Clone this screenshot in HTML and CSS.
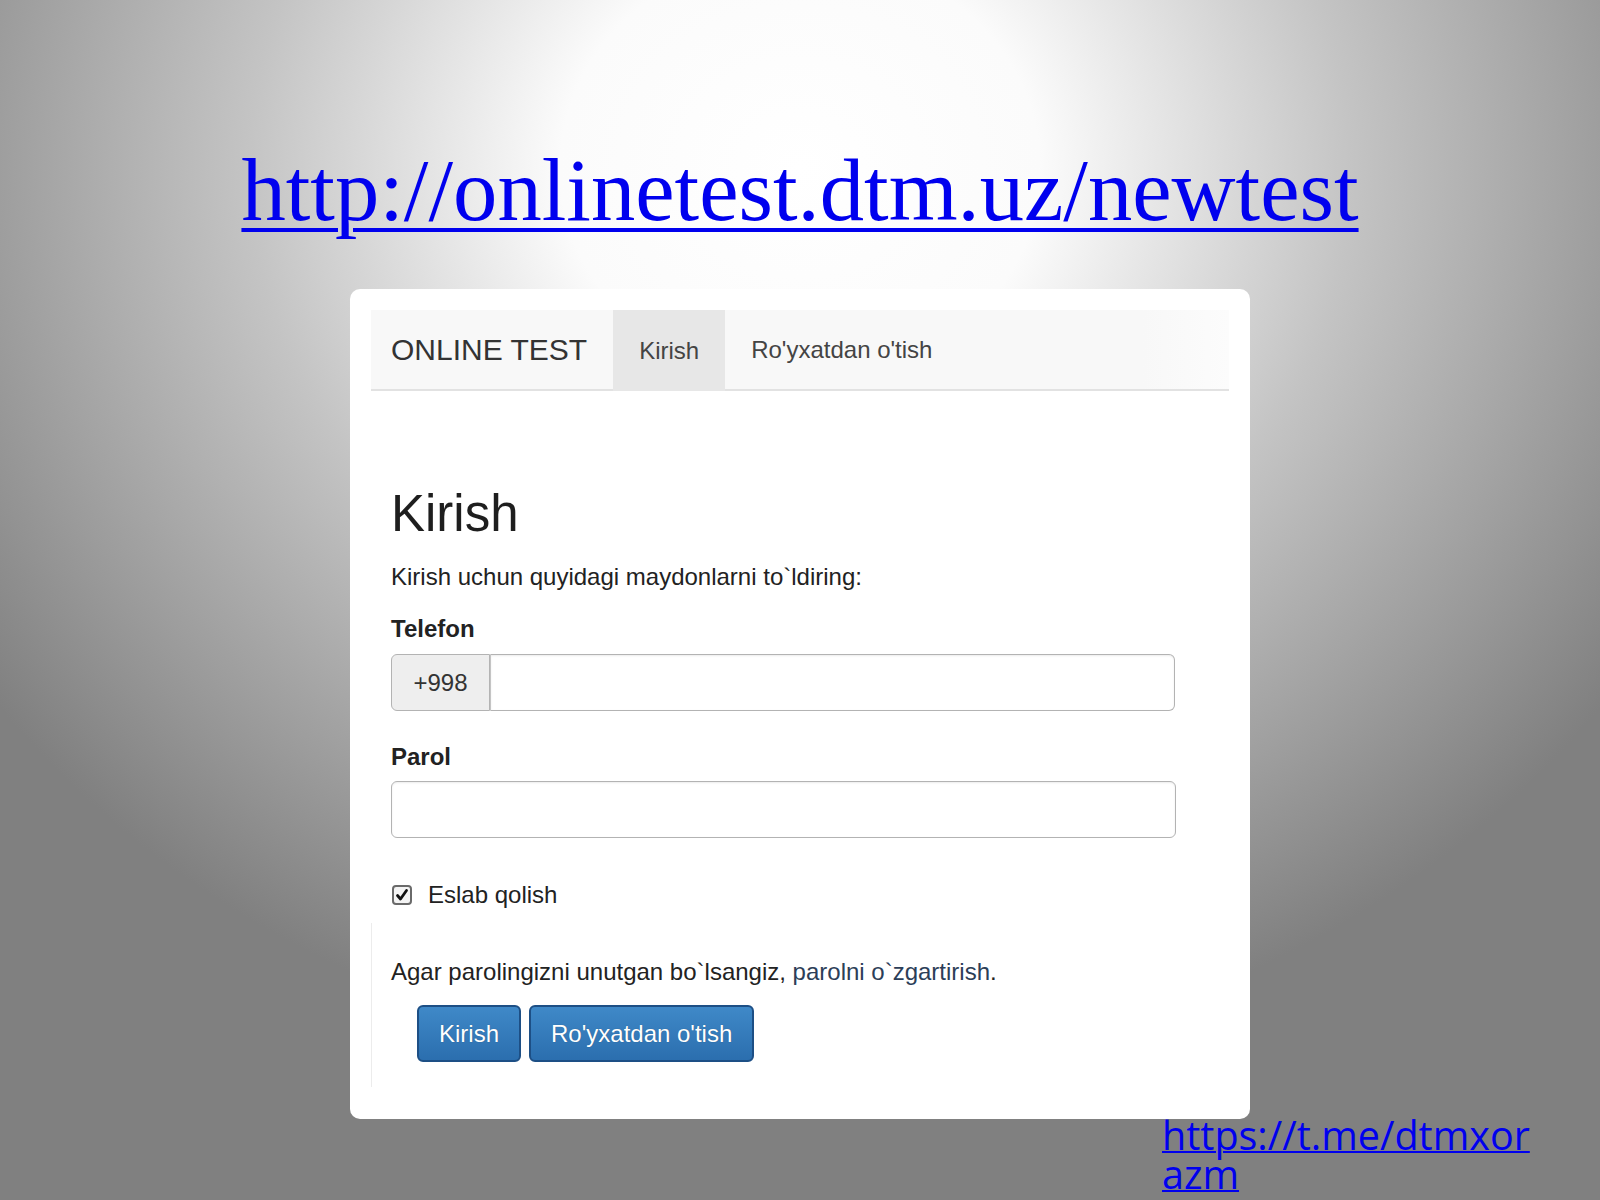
FILE: index.html
```html
<!DOCTYPE html>
<html lang="uz">
<head>
    <meta charset="UTF-8">
    <meta name="viewport" content="width=device-width, initial-scale=1.0">
    <title>Online test</title>
    <link rel="stylesheet" href="styles.css">
</head>
<body>

<div class="slide">
    <div class="title">
        <a href="#" class="big-link">http://onlinetest.dtm.uz/newtest</a>
    </div>

    <div class="card">
        <div class="navbar">
            <span class="brand">ONLINE TEST</span>
            <span class="tab active">Kirish</span>
            <span class="tab">Ro'yxatdan o'tish</span>
        </div>

        <div class="content">
            <h2 class="heading">Kirish</h2>
            <p class="intro">Kirish uchun quyidagi maydonlarni to`ldiring:</p>

            <label class="label">Telefon</label>
            <div class="input-group">
                <span class="addon">+998</span>
                <span class="field"></span>
            </div>

            <label class="label label-gap">Parol</label>
            <div class="input"></div>

            <div class="remember">
                <span class="checkbox">
                    <svg width="14" height="14" viewBox="0 0 14 14"><path d="M2.5 7.5 L5.5 11 L11.5 2.5" fill="none" stroke="#111" stroke-width="2.8" stroke-linecap="round" stroke-linejoin="round"/></svg>
                </span>
                <span>Eslab qolish</span>
            </div>
        </div>

        <div class="actions">
            <p class="forgot">Agar parolingizni unutgan bo`lsangiz, <a href="#">parolni o`zgartirish</a>.</p>
            <div class="buttons">
                <span class="btn">Kirish</span>
                <span class="btn">Ro'yxatdan o'tish</span>
            </div>
        </div>
    </div>

    <div class="footer">
        <a href="#" class="tg-link">https://t.me/dtmxorazm</a>
    </div>
</div>

</body>
</html>
```

FILE: styles.css
```css
body {
    margin: 0;
    width: 1600px;
    height: 1200px;
    overflow: hidden;
    font-family: "Liberation Sans", Arial, sans-serif;
    background: radial-gradient(ellipse 1000px 900px at 50% 14%, #ffffff 0%, #fbfbfb 24%, #c4c4c4 55%, #808080 100%);
}

.slide {
    display: flex;
    flex-direction: column;
    align-items: center;
}

.title {
    margin-top: 140px;
    line-height: 100px;
}

.big-link {
    font-family: "Liberation Serif", "Times New Roman", serif;
    font-size: 88.6px;
    color: #0000ee;
    text-decoration-thickness: 4px;
    text-underline-offset: 8px;
}

.card {
    margin-top: 24px;
    width: 858px;
    height: 788px;
    padding: 21px 21px;
    background: #fff;
    border-radius: 10px;
}

.navbar {
    display: flex;
    align-items: stretch;
    height: 79px;
    background: linear-gradient(to right, #f8f8f8 90%, #fcfcfc);
    border-bottom: 2px solid #e2e2e2;
    padding-left: 20px;
}

.brand {
    display: flex;
    align-items: center;
    padding-right: 26px;
    font-size: 30px;
    color: #333;
}

.tab {
    display: flex;
    align-items: center;
    padding: 0 26px;
    font-size: 24px;
    color: #444;
}

.tab.active {
    background: #e7e7e7;
    margin-bottom: -2px;
}

.content {
    padding-left: 20px;
    color: #222;
    font-size: 24px;
}

.heading {
    margin: 95px 0 0;
    font-size: 51px;
    line-height: 56px;
    font-weight: normal;
    color: #1e1e1e;
}

.intro {
    margin: 18px 0 0;
    line-height: 34px;
}

.label {
    display: block;
    margin-top: 18px;
    line-height: 34px;
    font-weight: bold;
}

.label-gap {
    margin-top: 29px;
}

.input-group {
    display: flex;
    margin-top: 8px;
    width: 784px;
    height: 57px;
}

.addon {
    display: flex;
    align-items: center;
    justify-content: center;
    width: 97px;
    background: #eee;
    border: 1px solid #b3b3b3;
    border-radius: 6px 0 0 6px;
    font-size: 24px;
    color: #333;
}

.field {
    flex: 1;
    border: 1px solid #b3b3b3;
    border-left: 1px solid #c4c4c4;
    border-radius: 0 6px 6px 0;
    box-shadow: inset 0 1px 2px rgba(0, 0, 0, 0.08);
}

.input {
    margin-top: 7px;
    width: 783px;
    height: 55px;
    border: 1px solid #b3b3b3;
    border-radius: 6px;
    box-shadow: inset 0 1px 2px rgba(0, 0, 0, 0.08);
}

.remember {
    display: flex;
    align-items: center;
    gap: 16px;
    margin-top: 40px;
    line-height: 34px;
}

.checkbox {
    display: flex;
    align-items: center;
    justify-content: center;
    width: 16px;
    height: 16px;
    margin-left: 1px;
    border: 2px solid #6a6a6a;
    border-radius: 4px;
    background: #f4f4f4;
}

.actions {
    margin-top: 11px;
    padding: 32px 0 25px 19px;
    border-left: 1px solid #ececec;
    font-size: 24px;
    color: #222;
}

.forgot {
    margin: 0;
    line-height: 34px;
}

.forgot a {
    color: #2c3e58;
    text-decoration: none;
}

.buttons {
    display: flex;
    gap: 8px;
    margin: 16px 0 0 26px;
}

.btn {
    display: flex;
    align-items: center;
    height: 53px;
    padding: 0 20px;
    background: linear-gradient(#3f89c8, #2b6eae);
    border: 2px solid #1d4f85;
    border-radius: 6px;
    color: #fff;
    font-size: 24px;
    text-shadow: 0 0 1px rgba(0, 0, 0, 0.3);
}

.footer {
    align-self: flex-start;
    margin: -3px 0 0 1162px;
    width: 376px;
    font-family: "Open Sans", "Noto Sans", sans-serif;
    font-size: 39.5px;
    line-height: 39px;
    word-break: break-all;
}

.tg-link {
    color: #0000ee;
    text-decoration-thickness: 2px;
}
```
